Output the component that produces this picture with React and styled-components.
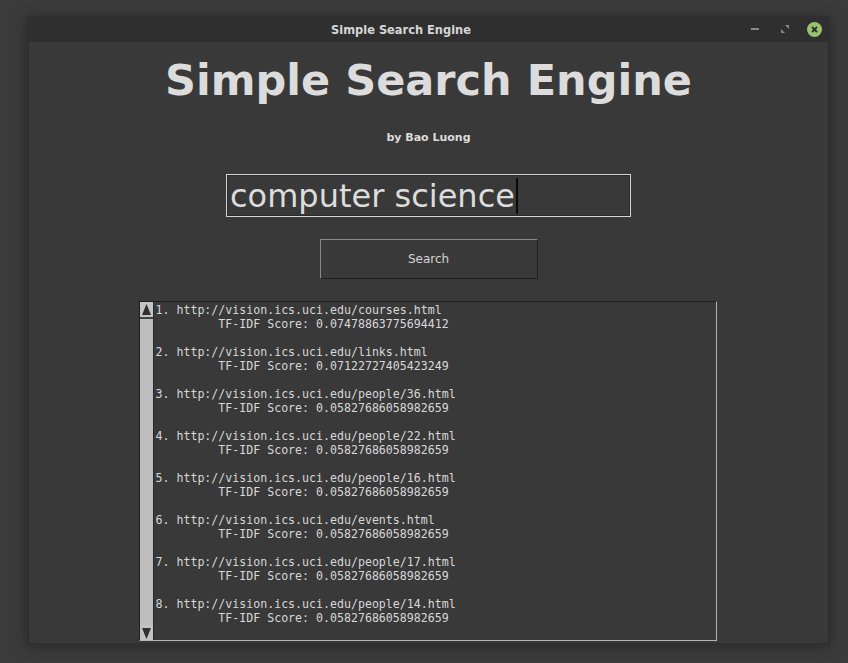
import React from "react";
import styled, { createGlobalStyle } from "styled-components";

const Global = createGlobalStyle`
  html, body { margin: 0; padding: 0; background: #3b3b3b; }
  body { width: 848px; height: 663px; overflow: hidden; font-family: "DejaVu Sans", sans-serif; }
`;

const Desktop = styled.div`
  width: 848px;
  height: 663px;
  padding: 16px 0 0 27px;
  box-sizing: border-box;
`;

const Window = styled.div`
  width: 803px;
  height: 628px;
  background: #2f2f2f;
  display: flex;
  flex-direction: column;
  box-shadow: 0 2px 14px rgba(0,0,0,0.35);
`;

const TitleBar = styled.div`
  height: 26px;
  display: flex;
  align-items: center;
  padding: 0 8px 0 0;
`;

const TitleText = styled.div`
  flex: 1;
  text-align: center;
  padding-left: 28px;
  color: #d6d6d6;
  font-family: "DejaVu Sans Condensed", "DejaVu Sans", sans-serif;
  font-weight: bold;
  font-size: 12.7px;
`;

const Controls = styled.div`
  display: flex;
  align-items: center;
  gap: 14px;
`;

const CtrlBtn = styled.div`
  width: 16px;
  height: 16px;
  display: flex;
  align-items: center;
  justify-content: center;
`;

const CloseBtn = styled.div`
  width: 15px;
  height: 15px;
  border-radius: 50%;
  background: #98c36c;
  display: flex;
  align-items: center;
  justify-content: center;
`;

const Content = styled.div`
  flex: 1;
  margin: 0 2px 1px 2px;
  background: #393939;
  display: flex;
  flex-direction: column;
  align-items: center;
`;

const Heading = styled.h1`
  margin: 12px 0 0 0;
  font-family: "DejaVu Sans", sans-serif;
  font-weight: bold;
  font-size: 43px;
  line-height: 52px;
  color: #dcdcdc;
`;

const Byline = styled.div`
  margin-top: 25px;
  font-family: "DejaVu Sans", sans-serif;
  font-weight: bold;
  font-size: 11px;
  line-height: 14px;
  color: #dcdcdc;
`;

const Entry = styled.div`
  margin-top: 29px;
  width: 405px;
  height: 43px;
  box-sizing: border-box;
  border: 1px solid #d4d4d4;
  box-shadow: inset 0 0 0 1px #2a2a2a;
  display: flex;
  align-items: center;
  padding-left: 3px;
  font-family: "DejaVu Sans", sans-serif;
  font-size: 32px;
  color: #dcdcdc;
`;

const Caret = styled.span`
  display: inline-block;
  width: 2px;
  height: 36px;
  background: #0a0a0a;
  margin-left: 1px;
`;

const Button = styled.div`
  margin-top: 22px;
  width: 218px;
  height: 40px;
  box-sizing: border-box;
  border-top: 1px solid #8a8a8a;
  border-left: 1px solid #8a8a8a;
  border-right: 1px solid #1f1f1f;
  border-bottom: 1px solid #1f1f1f;
  display: flex;
  align-items: center;
  justify-content: center;
  font-family: "DejaVu Sans", sans-serif;
  font-size: 12px;
  color: #d4d4d4;
`;

const ListBox = styled.div`
  margin-top: 22px;
  margin-right: 2px;
  width: 578px;
  height: 340px;
  box-sizing: border-box;
  border-top: 1px solid #1e1e1e;
  border-left: 1px solid #1e1e1e;
  border-right: 1px solid #b4b4b4;
  border-bottom: 1px solid #b4b4b4;
  display: flex;
`;

const ScrollBar = styled.div`
  width: 13px;
  background: #bdbdbd;
  border-right: 1px solid #2a2a2a;
  display: flex;
  flex-direction: column;
  justify-content: space-between;
`;

const Arrow = styled.div`
  height: 15px;
  display: flex;
  align-items: center;
  justify-content: center;
  background: #c4c4c4;
  border-bottom: ${p => (p.$down ? "none" : "2px solid #444")};
`;

const Lines = styled.pre`
  margin: 0;
  padding: 1px 0 0 2px;
  font-family: "DejaVu Sans Mono", monospace;
  font-size: 11.6px;
  line-height: 14px;
  color: #d8d8d8;
  white-space: pre;
`;

const results = [
  ["http://vision.ics.uci.edu/courses.html", "0.07478863775694412"],
  ["http://vision.ics.uci.edu/links.html", "0.07122727405423249"],
  ["http://vision.ics.uci.edu/people/36.html", "0.05827686058982659"],
  ["http://vision.ics.uci.edu/people/22.html", "0.05827686058982659"],
  ["http://vision.ics.uci.edu/people/16.html", "0.05827686058982659"],
  ["http://vision.ics.uci.edu/events.html", "0.05827686058982659"],
  ["http://vision.ics.uci.edu/people/17.html", "0.05827686058982659"],
  ["http://vision.ics.uci.edu/people/14.html", "0.05827686058982659"],
];

export default function App() {
  const text = results
    .map(([u, s], i) => `${i + 1}. ${u}\n         TF-IDF Score: ${s}\n`)
    .join("\n");
  return (
    <Desktop>
      <Global />
      <Window>
        <TitleBar>
          <TitleText>Simple Search Engine</TitleText>
          <Controls>
            <CtrlBtn>
              <svg width="8" height="2"><rect width="8" height="2" fill="#8a8a8a" /></svg>
            </CtrlBtn>
            <CtrlBtn>
              <svg width="8" height="8" viewBox="0 0 8 8">
                <path d="M4 0H8V4Z" fill="#8a8a8a" />
                <path d="M0 4V8H4Z" fill="#8a8a8a" />
              </svg>
            </CtrlBtn>
            <CloseBtn>
              <svg width="7" height="7" viewBox="0 0 7 7">
                <path d="M1 1L6 6M6 1L1 6" stroke="#2b2b2b" strokeWidth="1.8" />
              </svg>
            </CloseBtn>
          </Controls>
        </TitleBar>
        <Content>
          <Heading>Simple Search Engine</Heading>
          <Byline>by Bao Luong</Byline>
          <Entry>
            computer science<Caret />
          </Entry>
          <Button>Search</Button>
          <ListBox>
            <ScrollBar>
              <Arrow>
                <svg width="9" height="12" viewBox="0 0 9 12">
                  <path d="M4.5 0L9 11H0Z" fill="#2f2f2f" />
                </svg>
              </Arrow>
              <Arrow $down>
                <svg width="9" height="12" viewBox="0 0 9 12">
                  <path d="M0 1H9L4.5 12Z" fill="#2f2f2f" />
                </svg>
              </Arrow>
            </ScrollBar>
            <Lines>{text}</Lines>
          </ListBox>
        </Content>
      </Window>
    </Desktop>
  );
}
